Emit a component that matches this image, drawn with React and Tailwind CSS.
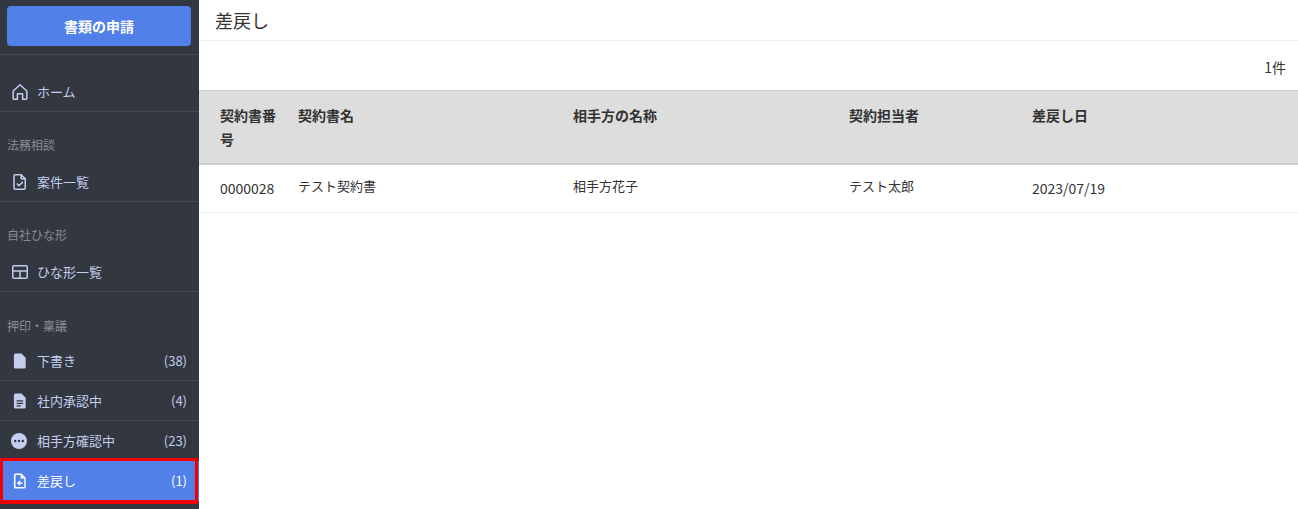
import React from 'react';

const HomeIcon = () => (
    <svg width="18" height="18" viewBox="0 0 18 18" fill="none" stroke="currentColor" strokeWidth="1.5" strokeLinejoin="round">
        <path d="M2.2 8 9 1.8 15.8 8v7.4a.8.8 0 0 1-.8.8h-3.4v-5.4H6.4v5.4H3a.8.8 0 0 1-.8-.8z" />
    </svg>
);

const FileCheckIcon = () => (
    <svg width="18" height="18" viewBox="0 0 18 18" fill="none" stroke="currentColor" strokeWidth="1.5" strokeLinejoin="round" strokeLinecap="round">
        <path d="M4.2 1.8h6l4 4v9.2a1.2 1.2 0 0 1-1.2 1.2H4.2A1.2 1.2 0 0 1 3 15V3a1.2 1.2 0 0 1 1.2-1.2z" />
        <path d="M10.2 1.8v4h4" />
        <path d="m6.2 11 1.8 1.8 3.4-3.4" />
    </svg>
);

const TemplateIcon = () => (
    <svg width="18" height="18" viewBox="0 0 18 18" fill="none" stroke="currentColor" strokeWidth="1.5">
        <rect x="1.8" y="2.8" width="14.4" height="12.4" rx="1" />
        <path d="M1.8 8h14.4M9 8v7.2" />
    </svg>
);

const FileIcon = () => (
    <svg width="18" height="18" viewBox="0 0 18 18" fill="currentColor">
        <path d="M4.4 1.5h6l4.3 4.3V15a1.5 1.5 0 0 1-1.5 1.5H4.4A1.5 1.5 0 0 1 2.9 15V3a1.5 1.5 0 0 1 1.5-1.5z" />
    </svg>
);

const FileTextIcon = () => (
    <svg width="18" height="18" viewBox="0 0 18 18" fill="currentColor">
        <path fillRule="evenodd" d="M4.4 1.5h6l4.3 4.3V15a1.5 1.5 0 0 1-1.5 1.5H4.4A1.5 1.5 0 0 1 2.9 15V3a1.5 1.5 0 0 1 1.5-1.5zM5.6 8.2v1.3h6.6V8.2zm0 2.5V12h6.6v-1.3zm0 2.5v1.3h4.4v-1.3z" />
    </svg>
);

const DotsIcon = () => (
    <svg width="18" height="18" viewBox="0 0 18 18" fill="currentColor">
        <path fillRule="evenodd" d="M8 1a8 8 0 1 1 0 16A8 8 0 0 1 8 1zM4.2 7.8a1.2 1.2 0 1 0 0 2.4 1.2 1.2 0 0 0 0-2.4zm3.8 0a1.2 1.2 0 1 0 0 2.4 1.2 1.2 0 0 0 0-2.4zm3.8 0a1.2 1.2 0 1 0 0 2.4 1.2 1.2 0 0 0 0-2.4z" />
    </svg>
);

const FileBackIcon = () => (
    <svg width="18" height="18" viewBox="0 0 18 18" fill="currentColor">
        <path fillRule="evenodd" d="M4.4 1.5h6l4.3 4.3V15a1.5 1.5 0 0 1-1.5 1.5H4.4A1.5 1.5 0 0 1 2.9 15V3a1.5 1.5 0 0 1 1.5-1.5zm.1 1.4V15h8.8V6.6H9.6V2.9zM8.6 8.4l1 1-1 1h3.2v1.4H8.6l1 1-1 1-2.8-2.7z" />
    </svg>
);

const NavRow = ({ icon, label, count, last }) => (
    <div className={`flex h-10 items-center pl-[11px] pr-3 text-[13px] text-[#c3cdef] ${last ? '' : 'border-b border-[#454952]'}`}>
        <span className="flex w-[26px] shrink-0">{icon}</span>
        <span className="flex-1">{label}</span>
        {count && <span>{count}</span>}
    </div>
);

const SectionLabel = ({ children, className = 'h-[50px] pb-2' }) => (
    <div className={`flex items-end pl-[7px] text-[12px] text-[#8a8c92] ${className}`}>{children}</div>
);

const columns = ['契約書番号', '契約書名', '相手方の名称', '契約担当者', '差戻し日'];

export default function App() {
    return (
        <div className="flex h-[509px] overflow-hidden bg-white font-['Noto_Sans_CJK_JP','Noto_Sans',sans-serif] text-[#333]">
            <aside className="flex w-[199px] shrink-0 flex-col bg-[#33373f]">
                <div className="border-b border-[#454952] pb-2 pl-[7px] pr-2 pt-1.5">
                    <button className="h-10 w-full rounded bg-[#5080e8] text-[14px] font-bold text-white">書類の申請</button>
                </div>
                <div className="mt-[17px]">
                    <NavRow icon={<HomeIcon />} label="ホーム" />
                </div>
                <SectionLabel>法務相談</SectionLabel>
                <NavRow icon={<FileCheckIcon />} label="案件一覧" />
                <SectionLabel>自社ひな形</SectionLabel>
                <NavRow icon={<TemplateIcon />} label="ひな形一覧" />
                <SectionLabel className="h-[49px] pb-[6px]">押印・稟議</SectionLabel>
                <NavRow icon={<FileIcon />} label="下書き" count="(38)" />
                <NavRow icon={<FileTextIcon />} label="社内承認中" count="(4)" />
                <NavRow icon={<DotsIcon />} label="相手方確認中" count="(23)" last />
                <div className="relative flex h-10 items-center bg-[#5080e8] pl-[11px] pr-3 text-[13px] text-white">
                    <span className="flex w-[26px] shrink-0"><FileBackIcon /></span>
                    <span className="flex-1">差戻し</span>
                    <span>(1)</span>
                    {/* annotation box drawn over the active row */}
                    <div className="absolute -bottom-[3px] -top-[3px] left-0 right-px border-x-[3px] border-b-4 border-t-[3px] border-[#f00000]" />
                </div>
            </aside>

            <main className="min-w-0 flex-1">
                <h1 className="flex h-[41px] items-center border-b border-[#eeeeee] pl-4 text-[18px] font-normal">差戻し</h1>
                <div className="flex h-[49px] items-start justify-end pr-3 pt-4 text-[14px]">1件</div>
                <table className="w-full table-fixed border-collapse">
                    <colgroup>
                        <col className="w-[78px]" />
                        <col className="w-[275px]" />
                        <col className="w-[276px]" />
                        <col className="w-[183px]" />
                        <col />
                    </colgroup>
                    <thead>
                        <tr className="h-[73px] border-b-2 border-t border-b-[#cccccc] border-t-[#cccccc] bg-[#dddddd]">
                            {columns.map((c, i) => (
                                <th key={c} className={`align-top pt-3 text-left text-[14px] font-bold leading-6 ${i === 0 ? 'pl-[21px] pr-0' : 'pl-[21px]'}`}>{c}</th>
                            ))}
                        </tr>
                    </thead>
                    <tbody>
                        <tr className="h-[49px] border-b border-[#eeeeee] align-top">
                            <td className="pl-[21px] pt-[13px] text-[14px]">0000028</td>
                            <td className="pl-[21px] pt-[11px] text-[13px]">テスト契約書</td>
                            <td className="pl-[21px] pt-[11px] text-[13px]">相手方花子</td>
                            <td className="pl-[21px] pt-[11px] text-[13px]">テスト太郎</td>
                            <td className="pl-[21px] pt-[13px] text-[14px]">2023/07/19</td>
                        </tr>
                    </tbody>
                </table>
            </main>
        </div>
    );
}
